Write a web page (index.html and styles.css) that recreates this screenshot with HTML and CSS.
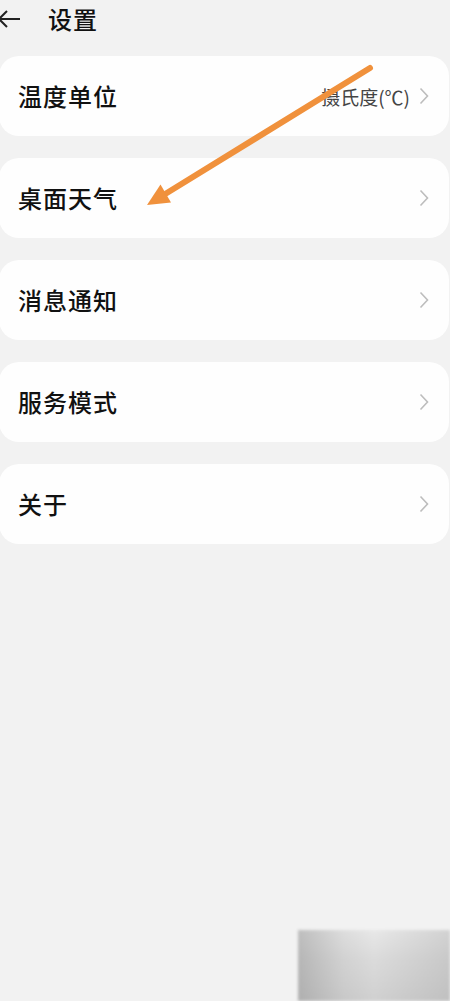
FILE: index.html
```html
<!DOCTYPE html>
<html lang="zh-CN">
<head>
<meta charset="utf-8">
<title>设置</title>
<link rel="stylesheet" href="styles.css">
</head>
<body>
<div class="page">
  <header class="header">
    <svg class="back" width="22" height="24" viewBox="0 0 22 24"><path d="M21 12H1M8 4L0 12L8 20" fill="none" stroke="#222" stroke-width="2"/></svg>
    <h1 class="title">设置</h1>
  </header>
  <div class="list">
    <div class="card">
      <span class="label">温度单位</span>
      <span class="right"><span class="value">摄氏度(℃)</span><svg class="chev" width="10" height="18" viewBox="0 0 10 18"><path d="M1.5 1.5L8.5 9L1.5 16.5" fill="none" stroke="#bdbdbd" stroke-width="1.6"/></svg></span>
    </div>
    <div class="card">
      <span class="label">桌面天气</span>
      <span class="right"><svg class="chev" width="10" height="18" viewBox="0 0 10 18"><path d="M1.5 1.5L8.5 9L1.5 16.5" fill="none" stroke="#bdbdbd" stroke-width="1.6"/></svg></span>
    </div>
    <div class="card">
      <span class="label">消息通知</span>
      <span class="right"><svg class="chev" width="10" height="18" viewBox="0 0 10 18"><path d="M1.5 1.5L8.5 9L1.5 16.5" fill="none" stroke="#bdbdbd" stroke-width="1.6"/></svg></span>
    </div>
    <div class="card">
      <span class="label">服务模式</span>
      <span class="right"><svg class="chev" width="10" height="18" viewBox="0 0 10 18"><path d="M1.5 1.5L8.5 9L1.5 16.5" fill="none" stroke="#bdbdbd" stroke-width="1.6"/></svg></span>
    </div>
    <div class="card">
      <span class="label">关于</span>
      <span class="right"><svg class="chev" width="10" height="18" viewBox="0 0 10 18"><path d="M1.5 1.5L8.5 9L1.5 16.5" fill="none" stroke="#bdbdbd" stroke-width="1.6"/></svg></span>
    </div>
  </div>
  <svg class="pointer" width="450" height="260" viewBox="0 0 450 260">
    <line x1="370" y1="68" x2="166" y2="193.5" stroke="#f0913c" stroke-width="6" stroke-linecap="round"/>
    <polygon points="147,205 160.5,184.5 171,202.5" fill="#f0913c"/>
  </svg>
  <div class="smudge"></div>
</div>
</body>
</html>
```

FILE: styles.css
```css
html, body {
  margin: 0;
  padding: 0;
}
body {
  background: #f2f2f2;
  font-family: "Noto Sans CJK SC", "Noto Sans", sans-serif;
  color: #111;
}
.page {
  position: relative;
  width: 450px;
  height: 1001px;
  overflow: hidden;
}
.header {
  display: flex;
  align-items: center;
  height: 38px;
  padding-left: 0;
}
.back {
  margin-left: -1px;
  flex: none;
}
.title {
  margin: 0 0 0 27px;
  font-size: 24px;
  font-weight: 500;
  line-height: 38px;
  letter-spacing: 1px;
}
.list {
  display: flex;
  flex-direction: column;
  gap: 22px;
  margin-top: 18px;
}
.card {
  display: flex;
  align-items: center;
  justify-content: space-between;
  height: 80px;
  margin: 0 1px 0 -1px;
  background: #fefefe;
  border-radius: 20px;
  padding: 0 20px 0 19px;
}
.label {
  font-size: 24px;
  font-weight: 500;
  letter-spacing: 1px;
  line-height: 1;
}
.right {
  display: flex;
  align-items: center;
  gap: 9px;
}
.value {
  font-size: 19px;
  color: #444;
  line-height: 1;
}
.chev {
  display: block;
}
.pointer {
  position: absolute;
  left: 0;
  top: 0;
}
.smudge {
  position: absolute;
  left: 298px;
  top: 930px;
  width: 152px;
  height: 71px;
  background:
    linear-gradient(90deg, rgba(150,150,150,0.5) 0%, rgba(200,200,200,0.3) 30%, rgba(240,240,240,0.2) 50%, rgba(200,200,200,0.3) 75%, rgba(180,180,180,0.4) 100%),
    linear-gradient(180deg, #e6e6e6 0%, #d6d6d6 40%, #c8c8c8 100%);
  filter: blur(1.5px);
}
```
